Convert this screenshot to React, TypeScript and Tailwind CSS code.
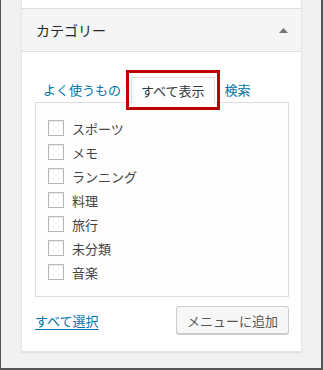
import React from "react";

const items = ["スポーツ", "メモ", "ランニング", "料理", "旅行", "未分類", "音楽"];

export default function App() {
  return (
    <div
      className="w-[323px] h-[370px] border-l border-r-2 border-b-2 border-[#555] bg-[#f1f1f1] pl-[20px] pr-[19px]"
      style={{ fontFamily: '"Noto Sans CJK JP", "Noto Sans", sans-serif' }}
    >
      <div className="w-[281px] flex flex-col border-x border-b border-[#e5e5e5] bg-white shadow-[0_1px_1px_rgba(0,0,0,0.06)]">
        <div className="h-[9px] bg-white border-b border-[#dddddd]" />
        <div className="h-[43px] bg-[#f5f5f5] border-b border-[#e1e1e1] flex items-center justify-between pl-[14px] pr-[13px]">
          <span className="text-[14px] text-[#23282d] leading-none">カテゴリー</span>
          <svg width="9" height="5" viewBox="0 0 9 5">
            <polygon points="0,5 4.5,0 9,5" fill="#72777c" />
          </svg>
        </div>
        <div className="bg-white pt-[24px] pl-[13px] pr-[12px] pb-[17px]">
          <div className="flex items-end pl-[8px] h-[26px] text-[13px] leading-none">
            <span className="text-[#0073aa] h-[25px] flex items-center">よく使うもの</span>
            <div className="relative z-10 ml-[10px] h-[26px] -mb-px px-[9px] border-t border-x border-[#dddddd] bg-[#fdfdfd] flex items-center pb-px text-[#32373c]">
              すべて表示
              <div className="absolute -top-[8px] -bottom-[7px] -left-[6px] -right-[6px] border-[3px] border-[#bd0000]" />
            </div>
            <span className="ml-[10px] text-[#0073aa] h-[25px] flex items-center">検索</span>
          </div>
          <div className="h-[195px] border border-[#dddddd] bg-[#fdfdfd] pt-[13px] pl-[12px]">
            {items.map((t) => (
              <div key={t} className="h-[24px] flex items-center">
                <span className="w-[16px] h-[16px] border border-[#b4b9be] bg-white shadow-[inset_0_1px_2px_rgba(0,0,0,0.08)]" />
                <span className="ml-[8px] text-[13px] text-[#444] leading-none">{t}</span>
              </div>
            ))}
          </div>
          <div className="mt-[9px] flex items-center justify-between">
            <span className="text-[13px] text-[#0073aa] underline underline-offset-[3px] leading-none">すべて選択</span>
            <button className="h-[28px] px-[10px] border border-[#cccccc] rounded-[3px] bg-[#f7f7f7] shadow-[0_1px_0_#cccccc] text-[13px] text-[#555] leading-none">
              メニューに追加
            </button>
          </div>
        </div>
      </div>
    </div>
  );
}
